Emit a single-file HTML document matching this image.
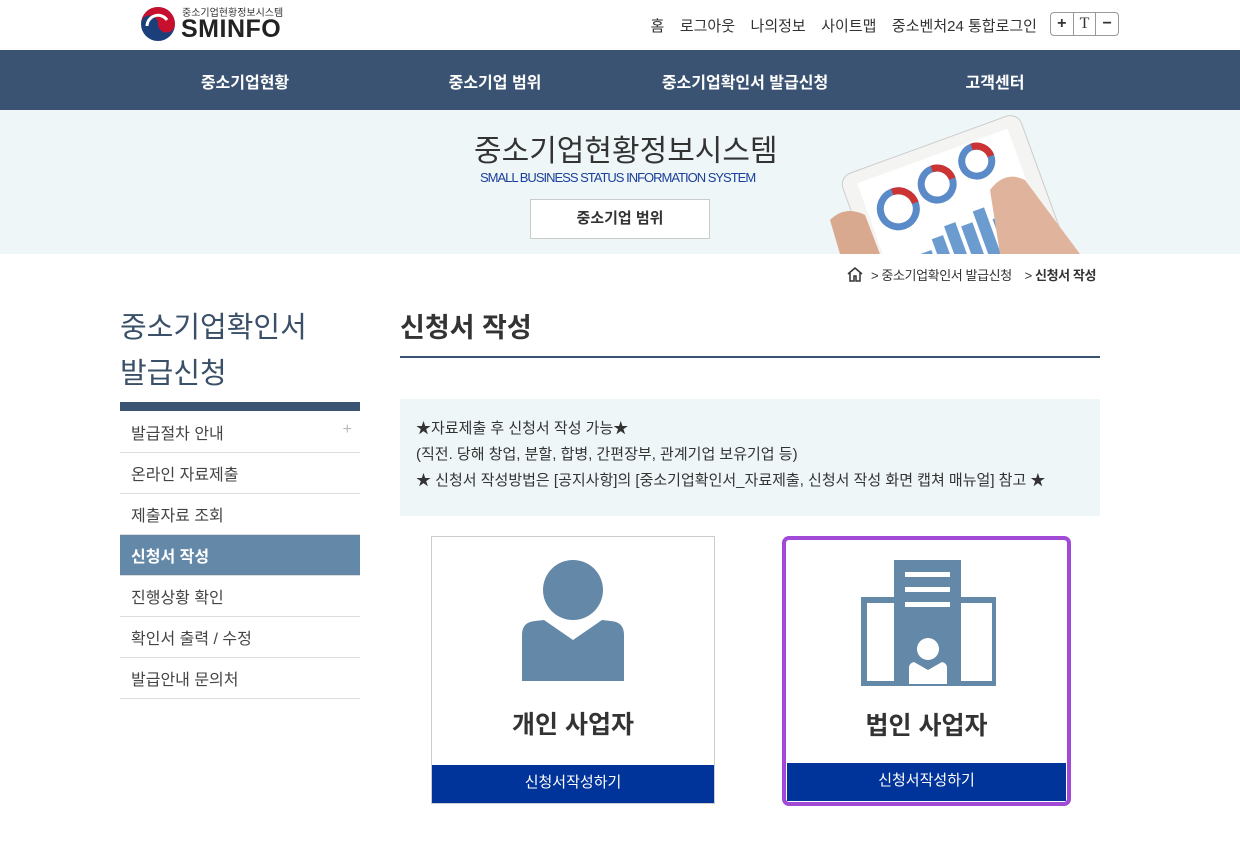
<!DOCTYPE html>
<html><head><meta charset="utf-8"><style>
*{margin:0;padding:0;box-sizing:border-box}
body{width:1240px;height:850px;background:#fff;font-family:"Liberation Sans","Noto Sans CJK KR",sans-serif;color:#333;position:relative;overflow:hidden}
.a{position:absolute}
.top a{font-size:15px;color:#333;margin-left:15.5px}
.nav{top:50px;left:0;width:1240px;height:60px;background:#3b5372}
.nav span{position:absolute;top:19px;color:#fff;font-size:16px;font-weight:bold;transform:translateX(-50%)}
.side li{list-style:none;height:41px;border-bottom:1px solid #ddd;font-size:16px;color:#444;padding:8px 0 0 11px;position:relative}
.side li.on{background:#6488a8;color:#fff;font-weight:bold}
.card{border:1px solid #ccc;background:#fff}
.btn{position:absolute;left:0;right:0;bottom:0;height:38px;background:#00349a;color:#fff;font-size:15px;text-align:center;line-height:36px}
.ct{position:absolute;left:0;right:0;text-align:center;font-size:25px;font-weight:bold;color:#333}
</style></head><body>
<svg class="a" style="left:140px;top:6px" width="36" height="36" viewBox="0 0 36 36"><circle cx="18" cy="18" r="17" fill="#1b3f7a"/><path d="M1 18A17 17 0 0 1 35 18A8.5 8.5 0 0 1 18 18A8.5 8.5 0 0 0 1 18Z" fill="#c8102e"/><path d="M7 20a11 11 0 0 1 20-6" stroke="#fff" stroke-width="3" fill="none"/></svg>
<div class="a" style="left:182px;top:4px;font-size:10px;color:#333">중소기업현황정보시스템</div>
<div class="a" style="left:181px;top:15px;font-size:25px;font-weight:bold;color:#222;letter-spacing:0.5px">SMINFO</div>
<div class="a top" style="left:635px;top:15px">
<a>홈</a><a>로그아웃</a><a>나의정보</a><a>사이트맵</a><a>중소벤처24 통합로그인</a></div>
<div class="a" style="left:1050px;top:12px;width:69px;height:24px;border:1px solid #999;border-radius:4px;display:flex;font-size:16px;font-weight:bold">
<div style="flex:1;text-align:center;border-right:1px solid #999;line-height:22px">+</div><div style="flex:1;text-align:center;border-right:1px solid #999;line-height:22px;font-family:'Liberation Serif';font-weight:normal">T</div><div style="flex:1;text-align:center;line-height:22px">−</div></div>
<div class="a nav"><span style="left:245px">중소기업현황</span><span style="left:495px">중소기업 범위</span><span style="left:745px">중소기업확인서 발급신청</span><span style="left:995px">고객센터</span></div>
<div class="a" style="top:110px;left:0;width:1240px;height:144px;background:#eef6f8"></div>
<div class="a" style="top:126px;left:474px;font-size:30px;color:#333">중소기업현황정보시스템</div>
<div class="a" style="top:170px;left:480px;font-size:13px;color:#1b3f9a;letter-spacing:-1px">SMALL BUSINESS STATUS INFORMATION SYSTEM</div>
<div class="a" style="top:199px;left:530px;width:180px;height:40px;background:#fff;border:1px solid #ccc;text-align:center;line-height:38px;font-size:15px;font-weight:bold">중소기업 범위</div>
<svg class="a" style="left:810px;top:110px" width="290" height="144">
<g transform="rotate(-20 140 80)"><rect x="40" y="30" width="190" height="150" rx="12" fill="#f4f4f2" stroke="#ccc"/><rect x="55" y="42" width="160" height="125" fill="#fff"/>
<circle cx="85" cy="80" r="18" fill="none" stroke="#5a8ac8" stroke-width="7"/><path d="M85 62a18 18 0 0 1 18 18" stroke="#c33" stroke-width="7" fill="none"/>
<circle cx="130" cy="70" r="16" fill="none" stroke="#5a8ac8" stroke-width="7"/><path d="M130 54a16 16 0 0 1 16 16" stroke="#c33" stroke-width="7" fill="none"/>
<circle cx="175" cy="62" r="15" fill="none" stroke="#5a8ac8" stroke-width="7"/><path d="M175 47a15 15 0 0 1 15 15" stroke="#c33" stroke-width="7" fill="none"/>
<rect x="90" y="130" width="12" height="35" fill="#6c9bd0"/><rect x="106" y="120" width="12" height="45" fill="#6c9bd0"/><rect x="122" y="112" width="12" height="53" fill="#6c9bd0"/><rect x="138" y="118" width="12" height="47" fill="#6c9bd0"/><rect x="154" y="108" width="12" height="57" fill="#6c9bd0"/><rect x="170" y="122" width="12" height="43" fill="#6c9bd0"/></g>
<path d="M30 144 L20 110 Q35 95 55 105 L70 144Z" fill="#d9a98f"/><path d="M190 144 L180 80 Q195 60 215 70 L270 144Z" fill="#e0b49c"/></svg>
<svg class="a" style="left:846px;top:266px" width="18" height="16"><path d="M2 8L9 2L16 8M4 7V15H8V10H10V15H14V7" stroke="#333" stroke-width="1.5" fill="none"/></svg>
<div class="a" style="left:871px;top:265px;font-size:13px;color:#333;letter-spacing:-0.4px">&gt; 중소기업확인서 발급신청 &nbsp;&nbsp; &gt; <b>신청서 작성</b></div>
<div class="a" style="left:120px;top:305px;font-size:29px;line-height:46px;color:#3a4f68">중소기업확인서<br>발급신청</div>
<div class="a" style="left:120px;top:402px;width:240px;height:9px;background:#3b5372"></div>
<ul class="a side" style="left:120px;top:412px;width:240px">
<li>발급절차 안내<span style="position:absolute;right:8px;top:9px;color:#bbb">+</span></li><li>온라인 자료제출</li><li>제출자료 조회</li><li class="on">신청서 작성</li><li>진행상황 확인</li><li>확인서 출력 / 수정</li><li>발급안내 문의처</li></ul>
<div class="a" style="left:400px;top:306px;font-size:27px;font-weight:bold;color:#333">신청서 작성</div>
<div class="a" style="left:400px;top:356px;width:700px;height:2px;background:#3b5372"></div>
<div class="a" style="left:400px;top:399px;width:700px;height:117px;background:#eef6f8;padding:17px 0 0 16px;font-size:15px;line-height:26px;color:#333">★자료제출 후 신청서 작성 가능★<br>(직전. 당해 창업, 분할, 합병, 간편장부, 관계기업 보유기업 등)<br>★ 신청서 작성방법은 [공지사항]의 [중소기업확인서_자료제출, 신청서 작성 화면 캡쳐 매뉴얼] 참고 ★</div>
<div class="a card" style="left:431px;top:536px;width:284px;height:268px">
<svg class="a" style="left:90px;top:22px" width="104" height="124"><circle cx="51" cy="31" r="30" fill="#6488a8"/><path d="M0 100V76Q0 63 13 62L22 61L51 81L80 61L89 62Q102 63 102 76V122H0Z" fill="#6488a8"/></svg>
<div class="ct" style="top:168px">개인 사업자</div><div class="btn">신청서작성하기</div></div>
<div class="a" style="left:782px;top:536px;width:289px;height:270px;border:4px solid #a04ad6;border-radius:7px;background:#fff">
<svg class="a" style="left:74px;top:16px" width="136" height="130"><rect x="4" y="44" width="131" height="84" fill="none" stroke="#6488a8" stroke-width="6"/><rect x="34" y="4" width="67" height="124" fill="#6488a8"/><rect x="45" y="16" width="45" height="5" fill="#fff"/><rect x="45" y="31" width="45" height="5" fill="#fff"/><rect x="45" y="46" width="45" height="5" fill="#fff"/><circle cx="68" cy="93" r="11" fill="#fff"/><path d="M49 128V112Q49 107 54 106L68 114L82 106Q87 107 87 112V128Z" fill="#fff"/></svg>
<div class="ct" style="top:166px">법인 사업자</div><div class="btn" style="left:1px;right:1px;bottom:1px">신청서작성하기</div></div>
</body></html>
